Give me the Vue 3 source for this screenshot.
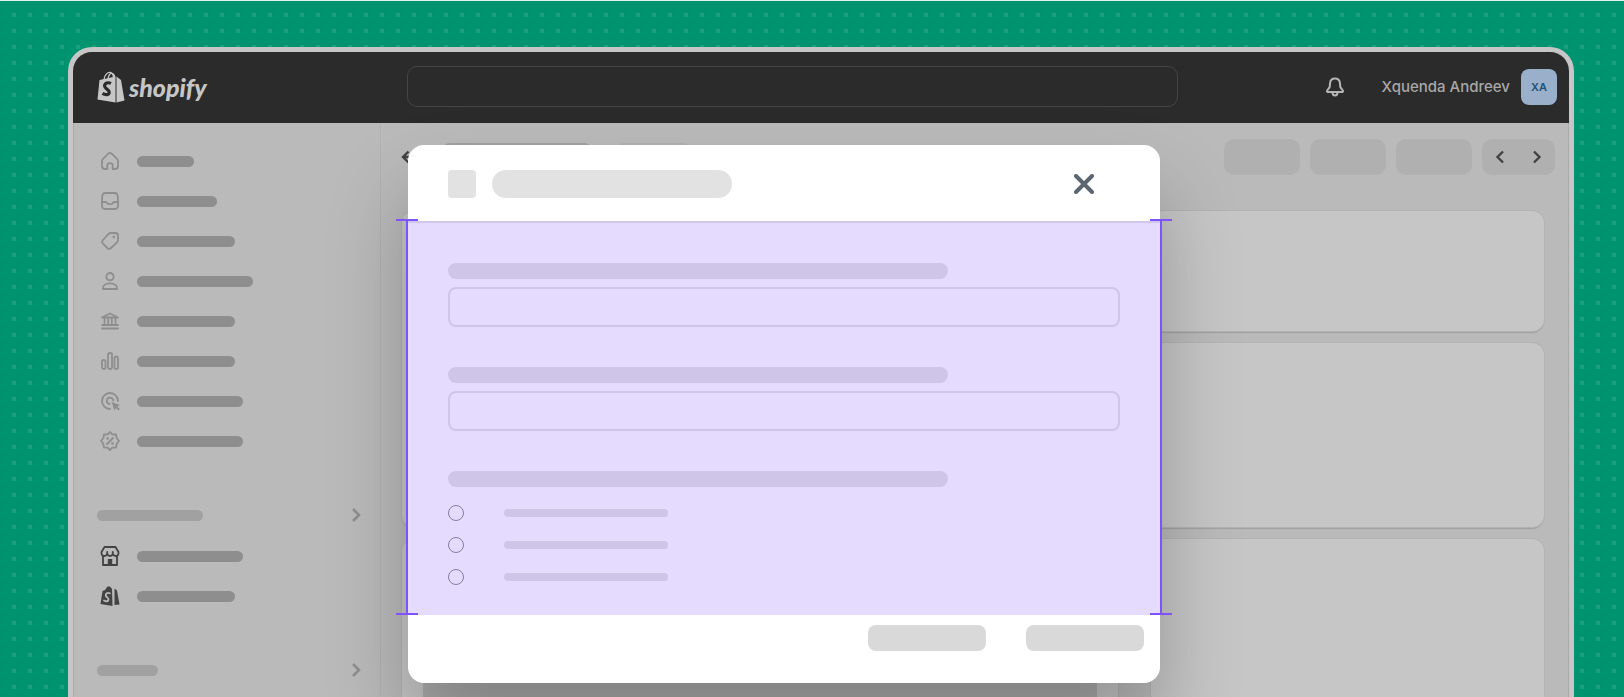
<template>
  <div class="page">
    <div class="frame">
      <header class="topbar">
        <a class="brand" href="#">
          <svg class="bag" width="28" height="32" viewBox="0 0 28 32" aria-hidden="true">
            <path d="M2.500 9 18.500 5.500V31.500L0.500 28.500Z" fill="#c6c6c6" />
            <path d="M19.500 5.500 24 9 27.500 29.600 19.500 31.500Z" fill="#c6c6c6" />
            <path d="M7 8.500C7.500 4 10.500 1 13.300 1.500 15.500 2 16.500 4.500 16.500 7M11 8C11.300 4.500 13.200 2 15 2.500 16.800 3 17.500 4.500 17.800 6.500" fill="none" stroke="#c6c6c6" stroke-width="1.300" />
            <path d="M14 12.400C11 11 7.600 12 7.600 15 7.600 18 12.200 18.200 12.200 21.200 12.200 24 8.500 24.300 5.500 22.400" fill="none" stroke="#2b2b2b" stroke-width="3.200" />
          </svg>
          <span class="wordmark">shopify</span>
        </a>
        <input class="search" type="search" aria-label="Search" />
        <div class="account">
          <button class="plain bell" type="button" aria-label="Notifications">
            <svg width="20" height="20" viewBox="0 0 20 20" fill="none" stroke="#b5b5b5" stroke-width="2" stroke-linejoin="round" stroke-linecap="round">
              <path d="M10 1.500C7 1.500 5.200 3.700 5 6.500L4.800 9.500C4.600 11 2.300 12.500 2 14 1.900 14.700 2.300 15 3 15H17C17.700 15 18.100 14.700 18 14 17.700 12.500 15.400 11 15.200 9.500L15 6.500C14.800 3.700 13 1.500 10 1.500Z" />
              <path d="M7.500 15.500C7.500 17.500 8.500 18.500 10 18.500S12.500 17.500 12.500 15.500" />
            </svg>
          </button>
          <span class="user">Xquenda Andreev</span>
          <span class="avatar">XA</span>
        </div>
      </header>

      <div class="layout">
        <nav class="sidebar" aria-label="Main">
          <a v-for="item in mainItems" :key="item.name" class="nav-item" href="#" :aria-label="item.name">
            <svg width="20" height="20" viewBox="0 0 20 20" class="icon">
              <path v-for="d in item.lines" :key="d" :d="d" />
              <path v-for="d in item.solid" :key="d" :d="d" class="solid" />
            </svg>
            <span class="bar" :style="{ width: item.width + 'px' }"></span>
          </a>

          <button class="plain group" type="button" aria-label="Sales channels">
            <span class="bar light" :style="{ width: '106px' }"></span>
            <svg width="10" height="16" viewBox="0 0 10 16" class="chevron"><path d="M2 2 8 8 2 14" /></svg>
          </button>

          <a class="nav-item" href="#" aria-label="Online store">
            <svg width="20" height="20" viewBox="0 0 20 20" class="icon dark">
              <path d="M4.500 1H15.500L18.500 6C18.800 9 17.500 10 15.700 10 14 10 13 9 12.800 7.500 12.600 9 11.500 10 10 10S7.400 9 7.200 7.500C7 9 6 10 4.300 10 2.500 10 1.200 9 1.500 6ZM7.200 6V8M12.800 6V8M3 10V19H17V10" />
              <path d="M7.800 19V13H12.200V19Z" class="solid" />
            </svg>
            <span class="bar" :style="{ width: '106px' }"></span>
          </a>
          <a class="nav-item" href="#" aria-label="Shop">
            <svg width="20" height="20" viewBox="0 0 20 20" class="icon">
              <path d="M2.500 5 5 4 7.500 0.500 10 0.500 12 3 12.500 20 0.500 18Z" class="ink" />
              <path d="M14.500 2.500 17 4.500 19.500 18.500 14.500 19Z" class="ink" />
              <path d="M9.800 7.300C7.500 6.200 5.500 7.500 5.800 9.500 6.100 11.400 8.700 11.600 8.500 13.700 8.300 15.600 6 15.700 4 14.500" class="letter" />
            </svg>
            <span class="bar" :style="{ width: '98px' }"></span>
          </a>

          <button class="plain group" type="button" aria-label="Apps">
            <span class="bar light" :style="{ width: '61px' }"></span>
            <svg width="10" height="16" viewBox="0 0 10 16" class="chevron"><path d="M2 2 8 8 2 14" /></svg>
          </button>
        </nav>

        <main class="content">
          <div class="toolbar">
            <button class="plain back" type="button" aria-label="Back">
              <svg width="16" height="16" viewBox="0 0 16 16" class="arrow"><path d="M7.500 2.500 2 8 7.500 13.500M2 8H15" /></svg>
            </button>
            <span class="crumb"></span>
            <span class="crumb small"></span>
            <div class="actions">
              <button v-for="n in 3" :key="n" class="action" type="button" :aria-label="'Action ' + n"></button>
              <div class="pager">
                <button class="plain" type="button" aria-label="Previous">
                  <svg width="10" height="16" viewBox="0 0 10 16" class="arrow"><path d="M8 2.500 2.500 8 8 13.500" /></svg>
                </button>
                <button class="plain" type="button" aria-label="Next">
                  <svg width="10" height="16" viewBox="0 0 10 16" class="arrow"><path d="M2 2.500 7.500 8 2 13.500" /></svg>
                </button>
              </div>
            </div>
          </div>
          <div class="columns">
            <div class="column wide">
              <section class="card tall"></section>
              <section class="card filled"><div class="block"></div></section>
            </div>
            <div class="column">
              <section class="card short"></section>
              <section class="card medium"></section>
              <section class="card"></section>
            </div>
          </div>
        </main>
      </div>
    </div>

    <div class="overlay">
      <div class="modal" role="dialog" aria-modal="true" aria-label="Dialog">
        <header class="modal-header">
          <span class="thumb"></span>
          <span class="title"></span>
          <button class="plain close" type="button" aria-label="Close">
            <svg width="20" height="20" viewBox="0 0 20 20"><path d="M2 2 18 18M18 2 2 18" fill="none" stroke="#5c6670" stroke-width="4" stroke-linecap="round" /></svg>
          </button>
        </header>

        <form class="modal-body" @submit.prevent>
          <div v-for="field in fields" :key="field" class="field">
            <label class="label" :for="field" :aria-label="field"></label>
            <input :id="field" class="input" type="text" />
          </div>
          <fieldset class="options">
            <legend class="label" aria-label="Options"></legend>
            <div v-for="n in 3" :key="n" class="option">
              <input :id="'option-' + n" type="radio" name="option" :value="n" />
              <label :for="'option-' + n" :aria-label="'Option ' + n"></label>
            </div>
          </fieldset>
          <!-- Measuring brackets on both sides of the body -->
          <i class="bracket left"></i>
          <i class="bracket right"></i>
        </form>

        <footer class="modal-footer">
          <button type="button" aria-label="Cancel"></button>
          <button type="button" aria-label="Save"></button>
        </footer>
      </div>
    </div>
  </div>
</template>

<script setup>
const fields = ['field-one', 'field-two']

const mainItems = [
  {
    name: 'Home',
    width: 57,
    lines: ['M10 1.800C9.300 1.800 8.800 2.200 8.300 2.700L3 7.800C2.200 8.600 2 9.200 2 10.200V15C2 17 3 18 5 18H7.300V14.500C7.300 13 8.300 12.200 10 12.200S12.700 13 12.700 14.500V18H15C17 18 18 17 18 15V10.200C18 9.200 17.800 8.600 17 7.800L11.700 2.700C11.200 2.200 10.700 1.800 10 1.800Z'],
    solid: []
  },
  {
    name: 'Orders',
    width: 80,
    lines: [
      'M5.500 2H14.500C16.500 2 17.500 3 17.700 5L18 10V14.500C18 17 17 18 14.500 18H5.500C3 18 2 17 2 14.500V10L2.300 5C2.500 3 3.500 2 5.500 2Z',
      'M2 11H5.500C6.500 11 6.800 11.500 7.300 12.300S8 13.200 9 13.200H11C12 13.200 12.200 13 12.700 12.300S13.500 11 14.500 11H18'
    ],
    solid: []
  },
  {
    name: 'Products',
    width: 98,
    lines: ['M10.500 2H15.500C17 2 18 3 18 4.500V9C18 10 17.700 10.600 17 11.300L11 17C9.700 18.200 8.500 18.200 7.300 17L3 12.700C1.800 11.500 1.800 10.200 3 9L8.500 3C9.200 2.300 9.700 2 10.500 2Z'],
    solid: ['M12.500 6A1.300 1.300 0 1 0 15.100 6 1.300 1.300 0 1 0 12.500 6Z']
  },
  {
    name: 'Customers',
    width: 116,
    lines: [
      'M6.300 5.700A3.700 3.700 0 1 0 13.700 5.700 3.700 3.700 0 1 0 6.300 5.700Z',
      'M2.800 18C2.500 14.500 5.500 12.300 10 12.300S17.500 14.500 17.200 18Z'
    ],
    solid: []
  },
  {
    name: 'Finances',
    width: 98,
    lines: ['M2 6.500 10 2.500 18 6.500ZM2 14H18M2 17.500H18M4.500 7V13.500M8.200 7V13.500M11.800 7V13.500M15.500 7V13.500'],
    solid: []
  },
  {
    name: 'Analytics',
    width: 98,
    lines: [
      'M2 10.500Q2 9 3.800 9T5.500 10.500V16.500Q5.500 18 3.800 18T2 16.500Z',
      'M8 3.500Q8 2 10 2T12 3.500V16.500Q12 18 10 18T8 16.500Z',
      'M14.500 7Q14.500 5.500 16.200 5.500T18 7V16.500Q18 18 16.200 18T14.500 16.500Z'
    ],
    solid: []
  },
  {
    name: 'Marketing',
    width: 106,
    lines: [
      'M10 18A8 8 0 1 1 18 10',
      'M9.500 13A3.200 3.200 0 1 1 13.200 9.500'
    ],
    solid: ['M11.500 11 20 14 17.300 15.500 20 18.300 18.500 19.500 15.800 17 14.500 19.700Z']
  },
  {
    name: 'Discounts',
    width: 106,
    lines: [
      'M10 1 12.400 3.300 16 3.500 16.700 7.200 19 10 16.700 12.800 16 16.500 12.400 16.700 10 19 7.600 16.700 4 16.500 3.300 12.800 1 10 3.300 7.200 4 3.500 7.600 3.300Z',
      'M7 13 13 7'
    ],
    solid: [
      'M6.200 7.500A1.300 1.300 0 1 0 8.800 7.500 1.300 1.300 0 1 0 6.200 7.500Z',
      'M11.200 12.500A1.300 1.300 0 1 0 13.800 12.500 1.300 1.300 0 1 0 11.200 12.500Z'
    ]
  }
]
</script>

<style>
body {
  margin: 0;
}
</style>

<style scoped>
.page,
.page * {
  box-sizing: border-box;
}

.page {
  position: relative;
  display: flex;
  flex-direction: column;
  height: 100vh;
  padding: 46px 50px 0 68px;
  overflow: hidden;
  border-top: 1px solid #dff2ec;
  background-color: #00936f;
  background-image: conic-gradient(from 270deg at 4px 4px, #1d9f7f 25%, transparent 0);
  background-position: 12px 12px;
  background-size: 16px 16px;
  font-family: Inter, "Liberation Sans", sans-serif;
}

.plain {
  display: flex;
  padding: 0;
  border: 0;
  background: none;
}

.frame {
  display: flex;
  flex: 1;
  flex-direction: column;
  overflow: hidden;
  border: 5px solid #c6c6c6;
  border-bottom: 0;
  border-radius: 24px 24px 0 0;
  background: #bababa;
}

.topbar {
  display: flex;
  flex: none;
  align-items: center;
  height: 71px;
  padding: 0 12px 2px 24px;
  background: #2b2b2b;
}

.brand {
  display: flex;
  flex: none;
  gap: 4px;
  width: 310px;
  text-decoration: none;
}

.wordmark {
  color: #c6c6c6;
  font: italic 900 25px/32px Lato, sans-serif;
}

.search {
  flex: 0 1 771px;
  min-width: 80px;
  height: 41px;
  border: 1px solid #454545;
  border-radius: 10px;
  background: transparent;
}

.account {
  display: flex;
  flex: none;
  align-items: center;
  margin-left: auto;
}

.bell {
  margin-right: 37px;
}

.user {
  margin-right: 11px;
  color: #a8a8a8;
  font-size: 15px;
  font-weight: 500;
}

.avatar {
  width: 36px;
  border-radius: 8px;
  background: #99afca;
  color: #1f5275;
  font-size: 11px;
  font-weight: 600;
  line-height: 36px;
  text-align: center;
}

.layout {
  display: flex;
  flex: 1;
  min-height: 0;
  border-left: 1px solid #a9a9a9;
  border-right: 1px solid #a9a9a9;
}

.sidebar {
  flex: none;
  width: 307px;
  padding: 18px 19px 0 23px;
  border-right: 1px solid #b1b1b1;
}

.nav-item {
  display: flex;
  align-items: center;
  gap: 17px;
  height: 40px;
  padding-left: 3px;
}

.bar {
  height: 11px;
  border-radius: 6px;
  background: #8e8e8e;
}

.bar.light {
  background: #a1a1a1;
}

.group {
  align-items: center;
  justify-content: space-between;
  width: 100%;
  height: 40px;
  margin: 34px 0 1px;
}

.icon {
  fill: none;
  stroke: #8e8e8e;
  stroke-width: 1.8;
  stroke-linejoin: round;
  stroke-linecap: round;
}

.icon .solid {
  fill: #8e8e8e;
  stroke: none;
}

.icon.dark {
  stroke: #434343;
}

.icon.dark .solid,
.icon .ink {
  fill: #434343;
  stroke: none;
}

.icon .letter {
  stroke: #bababa;
}

.chevron {
  fill: none;
  stroke: #8e8e8e;
  stroke-width: 2.5;
}

.content {
  display: flex;
  flex: 1;
  flex-direction: column;
  min-width: 0;
  padding: 16px 13px 0 21px;
}

.toolbar {
  display: flex;
  align-items: center;
  height: 36px;
}

.back {
  margin-left: -1px;
}

.crumb {
  width: 148px;
  height: 28px;
  margin-left: 26px;
  border-radius: 6px;
  background: #a1a1a1;
}

.crumb.small {
  width: 72px;
  background: #b1b1b1;
}

.actions {
  display: flex;
  gap: 10px;
  margin-left: auto;
}

.action,
.pager {
  width: 76px;
  height: 36px;
  border: 0;
  border-radius: 10px;
  background: #b0b0b0;
}

.pager {
  display: flex;
  align-items: center;
  justify-content: space-between;
  width: 73px;
  padding: 0 13px;
}

.arrow {
  fill: none;
  stroke: #434343;
  stroke-width: 2.4;
}

/* The cards run on below the visible part of the frame */
.columns {
  display: flex;
  flex: 1;
  gap: 33px;
  margin: 36px 11px -24px 0;
}

.column {
  display: flex;
  flex: 393 1 0;
  flex-direction: column;
  gap: 12px;
}

.column.wide {
  flex-grow: 716;
}

.card {
  flex: 1;
  border-radius: 12px;
  background: #c6c6c6;
  box-shadow: 0 0 0 1px #b3b3b3, 0 2px 1px #a0a0a0;
}

.card.short {
  flex: 0 0 120px;
}

.card.medium {
  flex: 0 0 184px;
}

.card.tall {
  flex: 0 0 316px;
}

.card.filled {
  display: flex;
  padding: 20px 21px 0;
}

.block {
  flex: 1;
  background: #adadad;
}

.overlay {
  position: absolute;
  inset: 0;
  display: flex;
  align-items: flex-start;
  justify-content: center;
  padding: 144px 56px 0 0;
}

.modal {
  width: 752px;
  border-radius: 16px;
  background: #fff;
  box-shadow: 0 48px 80px rgba(0, 0, 0, 0.25);
}

.modal-header {
  display: flex;
  align-items: center;
  gap: 16px;
  height: 76px;
  padding: 2px 66px 0 40px;
}

.thumb {
  width: 28px;
  height: 28px;
  border-radius: 4px;
  background: #e2e2e2;
}

.title {
  width: 240px;
  height: 28px;
  border-radius: 14px;
  background: #e2e2e2;
}

.close {
  margin-left: auto;
}

.modal-body {
  position: relative;
  display: flex;
  flex-direction: column;
  gap: 40px;
  padding: 40px 40px 30px;
  border-top: 2px solid #cfc5e8;
  background: #e5dbff;
}

.field {
  display: flex;
  flex-direction: column;
  gap: 8px;
}

.label {
  width: 500px;
  max-width: 100%;
  height: 16px;
  padding: 0;
  border-radius: 8px;
  background: #cfc5e8;
}

.input {
  width: 100%;
  height: 40px;
  border: 2px solid #cfc5e8;
  border-radius: 8px;
  background: transparent;
}

.options {
  display: flex;
  flex-direction: column;
  gap: 16px;
  min-width: 0;
  margin: 0;
  padding: 18px 0 0;
  border: 0;
}

.option {
  display: flex;
  align-items: center;
  gap: 40px;
}

.option input {
  width: 16px;
  height: 16px;
  margin: 0;
  appearance: none;
  border: 1px solid #887ba5;
  border-radius: 50%;
}

.option label {
  width: 164px;
  height: 8px;
  border-radius: 4px;
  background: #cfc5e8;
}

.bracket {
  position: absolute;
  top: -4px;
  bottom: 0;
  width: 22px;
  border: solid #8051ff;
  border-width: 2px 0;
}

.bracket::before {
  content: "";
  position: absolute;
  top: 0;
  bottom: 0;
  left: 10px;
  width: 2px;
  background: #8051ff;
}

.bracket.left {
  left: -12px;
}

.bracket.right {
  right: -12px;
}

.modal-footer {
  display: flex;
  justify-content: flex-end;
  gap: 40px;
  padding: 10px 16px 32px;
}

.modal-footer button {
  width: 118px;
  height: 26px;
  border: 0;
  border-radius: 8px;
  background: #d9d9d9;
}
</style>
